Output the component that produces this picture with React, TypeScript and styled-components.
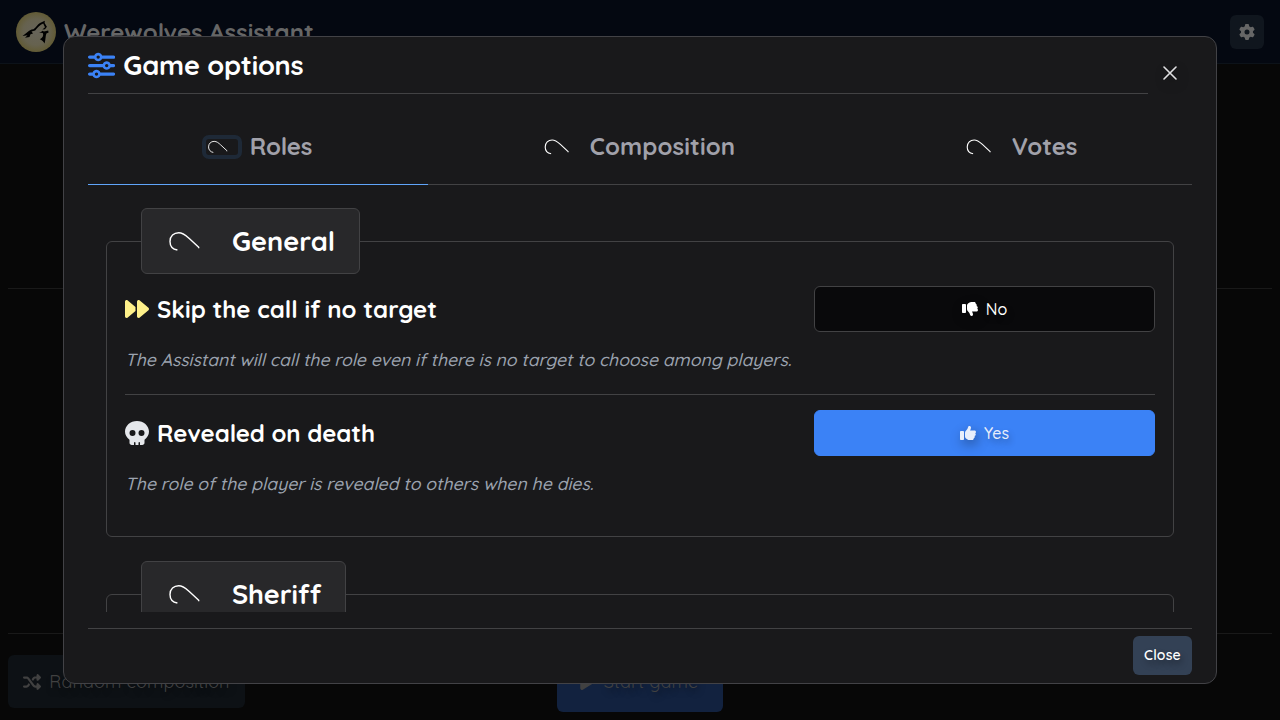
import React from "react";
import styled, { createGlobalStyle } from "styled-components";
import {
  FaForward,
  FaGear,
  FaPlay,
  FaShuffle,
  FaSkull,
  FaSliders,
  FaThumbsDown,
  FaThumbsUp,
} from "react-icons/fa6";

const GlobalStyle = createGlobalStyle`
  *, *::before, *::after { box-sizing: border-box; }
  body {
    margin: 0;
    overflow: hidden;
    background: #070707;
    color: #fff;
    font-family: "Quicksand", Lato, "Open Sans", sans-serif;
    font-size: 16px;
  }
  button { font-family: inherit; }
`;

const Label = styled.span<{ $track?: number }>`
  letter-spacing: ${(p) => p.$track ?? 0}px;
  white-space: nowrap;
`;

const Screen = styled.div`
  position: relative;
  display: flex;
  flex-direction: column;
  width: 1280px;
  height: 720px;
  overflow: hidden;
`;

const NavBar = styled.header`
  display: flex;
  align-items: center;
  justify-content: space-between;
  height: 64px;
  padding: 0 16px;
  background: #040811;
  border-bottom: 1px solid #0c1219;
`;

const Brand = styled.div`
  display: flex;
  align-items: center;
  gap: 8px;
  color: #666;
  font-size: 24px;
  font-weight: 700;
`;

const SettingsButton = styled.button`
  display: grid;
  place-items: center;
  width: 34px;
  height: 34px;
  padding: 0;
  border: 0;
  border-radius: 6px;
  background: #10161e;
  color: #666;
  font-size: 16px;
`;

const LobbyBody = styled.main`
  display: flex;
  flex: 1;
  flex-direction: column;
  padding: 224px 8px 0;
`;

const LobbyPlayers = styled.section`
  height: 346px;
  border-top: 1px solid #191919;
  border-bottom: 1px solid #191919;
`;

const LobbyActions = styled.footer`
  display: grid;
  grid-template-columns: 1fr auto 1fr;
  align-items: start;
  padding-top: 21px;
`;

const LobbyButton = styled.button<{ $primary?: boolean }>`
  display: flex;
  align-items: center;
  justify-content: center;
  justify-self: start;
  gap: 8px;
  width: ${(p) => (p.$primary ? 166 : 237)}px;
  height: ${(p) => (p.$primary ? 57 : 53)}px;
  padding: ${(p) => (p.$primary ? "0 4px 4px 0" : "0")};
  border: 0;
  border-radius: 6px;
  background: ${(p) => (p.$primary ? "#12223f" : "#0d1115")};
  color: #414141;
  font-size: 18px;
  text-shadow: 2px 4px 6px rgba(0, 0, 0, 0.4);
`;

const Dialog = styled.div`
  position: absolute;
  top: 36px;
  left: 63px;
  display: flex;
  flex-direction: column;
  width: 1154px;
  height: 648px;
  padding: 0 24px;
  border: 1px solid #424246;
  border-radius: 12px;
  background: #19191b;
`;

const DialogHeader = styled.div`
  display: flex;
  justify-content: space-between;
  height: 57px;
`;

const DialogTitle = styled.h2`
  display: flex;
  flex: 1;
  align-items: center;
  gap: 8px;
  margin: 0;
  border-bottom: 1px solid #424244;
  font-size: 27.2px;
  font-weight: 700;
  svg {
    margin-top: 2px;
    color: #3b82f6;
  }
`;

const DismissButton = styled.button`
  display: grid;
  place-items: center;
  width: 44px;
  height: 72px;
  padding: 0;
  border: 0;
  background: none;
  color: #e0e0e2;
  svg { filter: drop-shadow(2px 4px 6px rgba(0, 0, 0, 0.3)); }
`;

const TabList = styled.div`
  display: flex;
  height: 91px;
  border-bottom: 1px solid #424244;
`;

const Tab = styled.div<{ $width: number; $active?: boolean }>`
  display: flex;
  align-items: center;
  justify-content: center;
  gap: 8px;
  width: ${(p) => p.$width}px;
  height: 91px;
  padding: ${(p) => (p.$active ? "14px 2px 0 0" : "14px 0 0")};
  border-bottom: 1px solid ${(p) => (p.$active ? "#60a5fa" : "transparent")};
  color: #a1a1aa;
  font-size: 24px;
  font-weight: 700;
`;

const TabIcon = styled.span<{ $active?: boolean }>`
  display: flex;
  align-items: center;
  width: 40px;
  height: 24px;
  margin-top: 1px;
  border: ${(p) => (p.$active ? "4px solid #1e2937" : "0")};
  border-radius: 7px;
`;

const ScrollArea = styled.div`
  flex: 1;
  min-height: 0;
  padding: 23px 18px 0;
  overflow: hidden;
`;

const OptionGroup = styled.fieldset<{ $height: number }>`
  height: ${(p) => p.$height}px;
  min-width: 0;
  margin: 0 0 24px;
  padding: 12px 18px 0;
  border: 1px solid #424244;
  border-radius: 6px;
`;

const GroupLegend = styled.legend`
  display: flex;
  align-items: center;
  height: 66px;
  margin-left: 16px;
  padding: 0 24px;
  border: 1px solid #424244;
  border-radius: 6px;
  background: #28282a;
  font-size: 27.2px;
  font-weight: 700;
`;

const LegendIcon = styled.span`
  display: flex;
  width: 66px;
`;

const OptionRow = styled.div`
  display: flex;
  align-items: center;
  justify-content: space-between;
  height: 46px;
`;

const OptionName = styled.h3<{ $iconColor: string }>`
  display: flex;
  align-items: center;
  gap: 8px;
  margin: 0;
  font-size: 24px;
  font-weight: 700;
  svg { color: ${(p) => p.$iconColor}; }
`;

const Toggle = styled.button<{ $on?: boolean }>`
  display: flex;
  align-items: center;
  justify-content: center;
  gap: 8px;
  width: 341px;
  height: 46px;
  padding: 0;
  border: 1px solid ${(p) => (p.$on ? "#3b82f6" : "#424244")};
  border-radius: 6px;
  background: ${(p) => (p.$on ? "#3b82f6" : "#09090b")};
  color: ${(p) => (p.$on ? "#e8eefb" : "#fff")};
  font-size: 16px;
  font-weight: 500;
  text-shadow: 2px 4px 6px rgba(0, 0, 0, 0.3);
  svg { filter: drop-shadow(2px 4px 6px rgba(0, 0, 0, 0.4)); }
`;

const OptionHint = styled.p`
  height: 24px;
  margin: 15px 0 0;
  color: #9ca3af;
  font-size: 17.6px;
  font-style: italic;
  font-weight: 500;
  line-height: 24px;
`;

const Divider = styled.hr`
  height: 1px;
  margin: 23px 0 15px;
  border: 0;
  background: #424244;
`;

const DialogFooter = styled.div`
  display: flex;
  align-items: flex-start;
  justify-content: flex-end;
  height: 55px;
  margin-top: 16px;
  padding-top: 7px;
  border-top: 1px solid #424244;
`;

const CloseButton = styled.button`
  width: 59px;
  height: 39px;
  padding: 0 0 2px;
  border: 0;
  border-radius: 6px;
  background: #334155;
  color: #fff;
  font-size: 14px;
  font-weight: 600;
  text-shadow: 2px 4px 6px rgba(0, 0, 0, 0.4);
`;

const WolfLogo = () => (
  <svg width="40" height="40" viewBox="0 0 40 40">
    <defs>
      <radialGradient id="moon">
        <stop offset="0" stopColor="#67645a" />
        <stop offset="0.65" stopColor="#66624f" />
        <stop offset="1" stopColor="#625b35" />
      </radialGradient>
    </defs>
    <circle cx="20" cy="20" r="20" fill="url(#moon)" />
    <path
      fill="#000"
      d="M6.500 24L11 20.500C13 18.500 15 17.500 17.500 17.300C20 15.500 21.500 12.500 24 11L28.800 8.700L28.600 11L30.900 14.800L29 17.200L26.400 17.400L29 15.200L27.200 11.400C24 12.600 21.200 15.800 19.200 18.500L15.500 19.600L17 21.600L14.500 22.200L13.500 24.900L9 25.700L11.500 23.200Z"
    />
    <path
      fill="#000"
      d="M23 20.400C24.500 20.300 25.500 19.800 26.500 18.800L28 19.600L32.200 18.400L32.600 20.400L30.400 21.400C29.400 24 29.800 27 28.600 31.400C27.600 29.600 26 28 23.800 27.200C26.800 25.500 27.900 23.600 26.800 21Z"
    />
  </svg>
);

const Squiggle = ({ size }: { size: number }) => (
  <svg width={size} height={size * 0.6} viewBox="0 0 40 24" fill="none">
    <path
      d="M11.400 21C6.800 20.200 4 16.900 4 12.400C4 7.100 7.800 3.700 12.700 3.700C17 3.700 19.700 6.300 23 9.300L32.700 18.300L32.700 19.200"
      stroke="#fff"
      strokeWidth="1.400"
      strokeLinejoin="round"
    />
  </svg>
);

const CrossIcon = () => (
  <svg width="14" height="14" viewBox="0 0 14 14" fill="none">
    <path d="M1 1L13 13M13 1L1 13" stroke="currentColor" strokeWidth="1.600" strokeLinecap="round" />
  </svg>
);

export default function App() {
  return (
    <>
      <GlobalStyle />
      <Screen>
        <NavBar>
          <Brand>
            <WolfLogo />
            <Label $track={-0.03}>Werewolves Assistant</Label>
          </Brand>
          <SettingsButton aria-label="Settings">
            <FaGear />
          </SettingsButton>
        </NavBar>
        <LobbyBody>
          <LobbyPlayers />
          <LobbyActions>
            <LobbyButton>
              <FaShuffle />
              <Label $track={0.1}>Random composition</Label>
            </LobbyButton>
            <LobbyButton $primary>
              <FaPlay />
              <Label $track={0.1}>Start game</Label>
            </LobbyButton>
          </LobbyActions>
        </LobbyBody>

        <Dialog role="dialog">
          <DialogHeader>
            <DialogTitle>
              <FaSliders />
              <Label $track={-0.22}>Game options</Label>
            </DialogTitle>
            <DismissButton aria-label="Dismiss">
              <CrossIcon />
            </DismissButton>
          </DialogHeader>

          <TabList>
            <Tab $width={340} $active>
              <TabIcon $active>
                <Squiggle size={25.6} />
              </TabIcon>
              <Label $track={-0.15}>Roles</Label>
            </Tab>
            <Tab $width={421}>
              <TabIcon>
                <Squiggle size={32} />
              </TabIcon>
              <Label $track={0.1}>Composition</Label>
            </Tab>
            <Tab $width={343}>
              <TabIcon>
                <Squiggle size={32} />
              </TabIcon>
              <Label $track={-0.1}>Votes</Label>
            </Tab>
          </TabList>

          <ScrollArea>
            <OptionGroup $height={329}>
              <GroupLegend>
                <LegendIcon>
                  <Squiggle size={40} />
                </LegendIcon>
                <Label>General</Label>
              </GroupLegend>
              <OptionRow>
                <OptionName $iconColor="#fef08a">
                  <FaForward />
                  <Label>Skip the call if no target</Label>
                </OptionName>
                <Toggle>
                  <FaThumbsDown />
                  <Label>No</Label>
                </Toggle>
              </OptionRow>
              <OptionHint>
                <Label $track={-0.025}>
                  The Assistant will call the role even if there is no target to choose among players.
                </Label>
              </OptionHint>
              <Divider />
              <OptionRow>
                <OptionName $iconColor="#e5e7eb">
                  <FaSkull />
                  <Label $track={-0.09}>Revealed on death</Label>
                </OptionName>
                <Toggle $on>
                  <FaThumbsUp />
                  <Label>Yes</Label>
                </Toggle>
              </OptionRow>
              <OptionHint>
                <Label $track={0.015}>The role of the player is revealed to others when he dies.</Label>
              </OptionHint>
            </OptionGroup>
            <OptionGroup $height={200}>
              <GroupLegend>
                <LegendIcon>
                  <Squiggle size={40} />
                </LegendIcon>
                <Label $track={-0.15}>Sheriff</Label>
              </GroupLegend>
            </OptionGroup>
          </ScrollArea>

          <DialogFooter>
            <CloseButton>
              <Label $track={0.2}>Close</Label>
            </CloseButton>
          </DialogFooter>
        </Dialog>
      </Screen>
    </>
  );
}
